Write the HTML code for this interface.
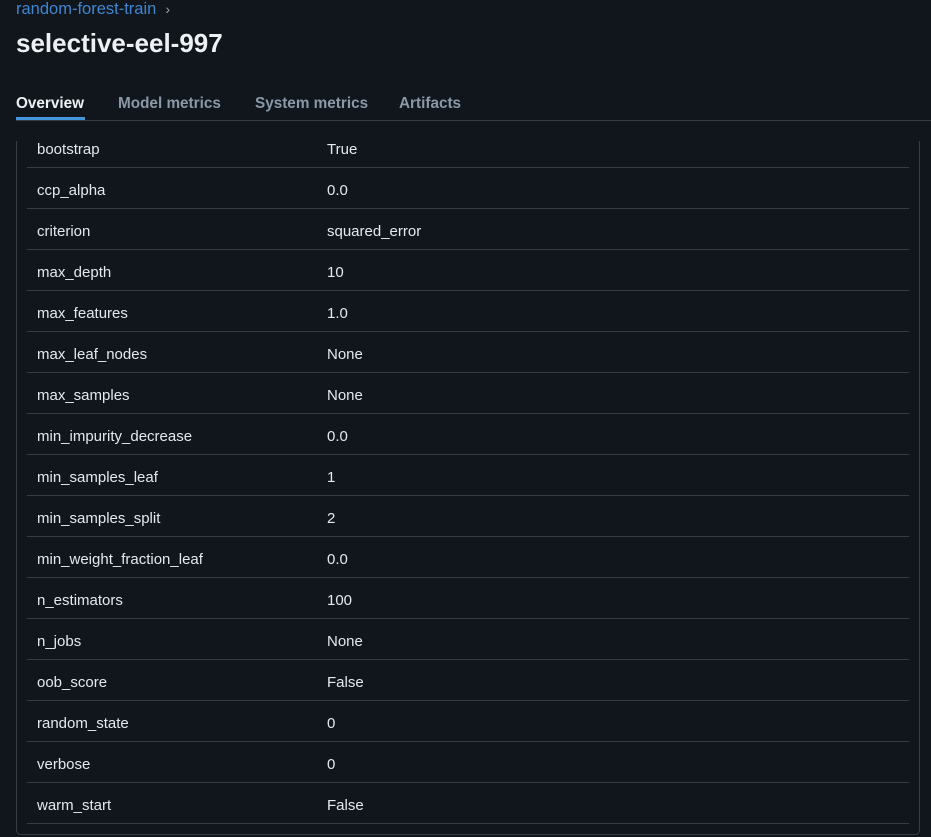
<!DOCTYPE html>
<html><head><style>
*{margin:0;padding:0;box-sizing:border-box}
body{width:931px;height:837px;background:#11161d;font-family:"Liberation Sans",sans-serif;color:#e5e9ee;overflow:hidden;position:relative}
.bc{position:absolute;left:16px;top:0px;font-size:16.5px;color:#3f86d0}
.bc span{color:#9aa5b1;margin-left:9px;font-size:14px}
h1{position:absolute;left:16px;top:28px;font-size:26px;font-weight:bold;color:#eef1f4}
.tabs{position:absolute;left:16px;top:93px;right:0;height:28px;border-bottom:1px solid #343d47}
.tab{position:absolute;top:2px;font-size:15.3px;font-weight:bold;color:#8a98a8}
.tab.a{color:#eef1f4}
.ul{position:absolute;left:0;top:22px;width:69px;height:3px;background:#4497de}
.box{position:absolute;left:16px;top:141px;width:904px;height:694px;border:1px solid #343d47;border-top:none;border-radius:0 0 5px 5px}
.row{position:absolute;left:27px;width:882px;height:41px;border-bottom:1px solid #343d47;font-size:15px}
.row div{position:absolute;top:14px}
.k{left:10px}.v{left:300px}
</style></head><body>
<div class="bc">random-forest-train<span>›</span></div>
<h1>selective-eel-997</h1>
<div class="tabs">
<div class="tab a" style="left:0">Overview<div class="ul"></div></div>
<div class="tab" style="left:102px">Model metrics</div>
<div class="tab" style="left:239px">System metrics</div>
<div class="tab" style="left:383px">Artifacts</div>
</div>
<div class="box"></div>
<div class="row" style="top:127px"><div class="k">bootstrap</div><div class="v">True</div></div>
<div class="row" style="top:168px"><div class="k">ccp_alpha</div><div class="v">0.0</div></div>
<div class="row" style="top:209px"><div class="k">criterion</div><div class="v">squared_error</div></div>
<div class="row" style="top:250px"><div class="k">max_depth</div><div class="v">10</div></div>
<div class="row" style="top:291px"><div class="k">max_features</div><div class="v">1.0</div></div>
<div class="row" style="top:332px"><div class="k">max_leaf_nodes</div><div class="v">None</div></div>
<div class="row" style="top:373px"><div class="k">max_samples</div><div class="v">None</div></div>
<div class="row" style="top:414px"><div class="k">min_impurity_decrease</div><div class="v">0.0</div></div>
<div class="row" style="top:455px"><div class="k">min_samples_leaf</div><div class="v">1</div></div>
<div class="row" style="top:496px"><div class="k">min_samples_split</div><div class="v">2</div></div>
<div class="row" style="top:537px"><div class="k">min_weight_fraction_leaf</div><div class="v">0.0</div></div>
<div class="row" style="top:578px"><div class="k">n_estimators</div><div class="v">100</div></div>
<div class="row" style="top:619px"><div class="k">n_jobs</div><div class="v">None</div></div>
<div class="row" style="top:660px"><div class="k">oob_score</div><div class="v">False</div></div>
<div class="row" style="top:701px"><div class="k">random_state</div><div class="v">0</div></div>
<div class="row" style="top:742px"><div class="k">verbose</div><div class="v">0</div></div>
<div class="row" style="top:783px"><div class="k">warm_start</div><div class="v">False</div></div>
</body></html>
